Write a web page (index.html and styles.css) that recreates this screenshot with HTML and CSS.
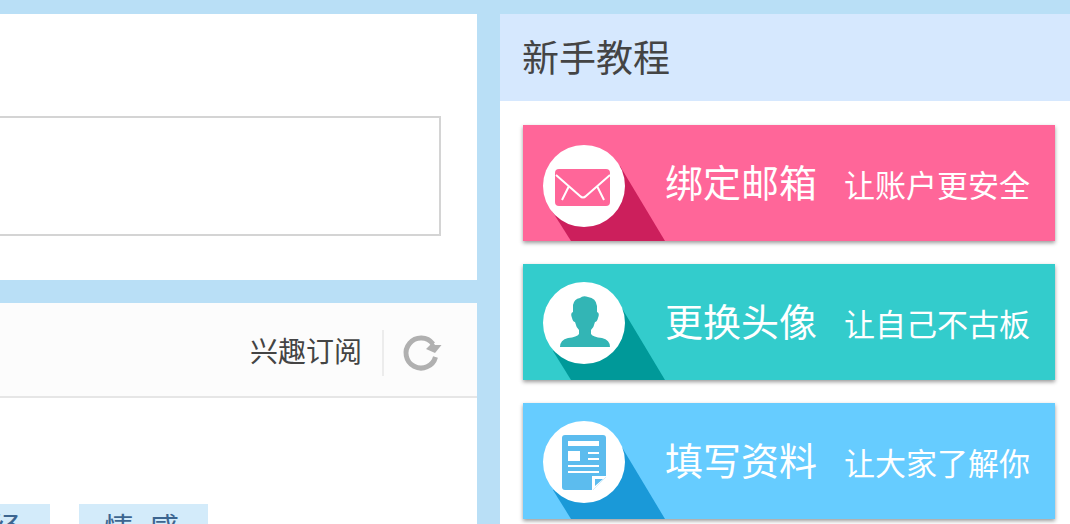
FILE: index.html
```html
<!DOCTYPE html>
<html lang="zh-CN">
<head>
    <meta charset="UTF-8">
    <meta name="viewport" content="width=device-width, initial-scale=1.0">
    <title>新手教程</title>
    <link rel="stylesheet" href="styles.css">
</head>
<body>
    <div class="page">
        <main class="main">
            <form class="card publish">
                <textarea class="publish-text" aria-label="发布内容"></textarea>
            </form>
            <section class="card feed">
                <div class="feed-header">
                    <a class="subscribe" href="#">兴趣订阅</a>
                    <button class="refresh" type="button" aria-label="刷新">
                        <svg width="40" height="40" viewBox="0 0 40 40">
                            <path d="M33.5 24A15 15 0 1 1 31 11" fill="none" stroke="#b0b0b0" stroke-width="5"/>
                            <path d="M39.5 12L33 20L24 16L31 9L33 12Z" fill="#b0b0b0"/>
                        </svg>
                    </button>
                </div>
                <div class="tags">
                    <a class="tag" href="#">财&ensp;经</a>
                    <a class="tag" href="#">情&ensp;感</a>
                </div>
            </section>
        </main>
        <aside class="guide">
            <h2 class="guide-title">新手教程</h2>
            <div class="guide-list">
                <a class="banner banner-mail" href="#">
                    <svg class="banner-icon" width="142" height="116" viewBox="0 0 142 116">
                        <path class="long-shadow" d="M97 41L142 116H48L29 86Z"/>
                        <circle cx="61" cy="61" r="41" fill="#fff"/>
                        <rect class="glyph" x="32" y="44" width="55" height="37" rx="4"/>
                        <path d="M33 50L57 71Q60 74 63 71L87 50M46 61L39 75M74 61L81 75" fill="none" stroke="#fff" stroke-width="2"/>
                    </svg>
                    <span class="banner-name">绑定邮箱</span>
                    <span class="banner-desc">让账户更安全</span>
                </a>
                <a class="banner banner-avatar" href="#">
                    <svg class="banner-icon" width="142" height="116" viewBox="0 0 142 116">
                        <path class="long-shadow" d="M97 41L142 116H48L30 87Z"/>
                        <circle cx="61" cy="59" r="41" fill="#fff"/>
                        <path class="glyph" d="M50 41Q51 35 57 34Q60 31 65 33Q73 34 74 42V48Q77 49 75 54Q74 58 72 58Q71 63 68 66V70Q70 73 79 74Q87 76 87 83H37Q37 76 45 74Q54 73 56 70V66Q53 63 52 58Q50 58 49 54Q47 49 50 48Z"/>
                    </svg>
                    <span class="banner-name">更换头像</span>
                    <span class="banner-desc">让自己不古板</span>
                </a>
                <a class="banner banner-profile" href="#">
                    <svg class="banner-icon" width="142" height="116" viewBox="0 0 142 116">
                        <path class="long-shadow" d="M97 41L142 116H48L30 87Z"/>
                        <circle cx="61" cy="59" r="41" fill="#fff"/>
                        <path class="glyph" d="M42 32H80Q83 32 83 35V74L70 87H42Q39 87 39 84V35Q39 32 42 32Z"/>
                        <path d="M65 50H76M65 56H76M45 63H76M45 69H76" stroke="#fff" stroke-width="2"/>
                        <path d="M45 38H76V43H45ZM45 48H57V58H45ZM69 88V73H84Z" fill="#fff"/>
                        <path class="glyph" d="M72 83V76H80Z"/>
                    </svg>
                    <span class="banner-name">填写资料</span>
                    <span class="banner-desc">让大家了解你</span>
                </a>
            </div>
        </aside>
    </div>
</body>
</html>
```

FILE: styles.css
```css
* {
    box-sizing: border-box;
}
body {
    margin: 0;
    height: 100vh;
    overflow: hidden;
    background-color: #b9dff6;
    font-family: "Liberation Sans", "Noto Sans CJK SC", sans-serif;
    color: #444;
}
a {
    color: inherit;
    text-decoration: none;
}
.page {
    display: grid;
    grid-template-columns: minmax(0, 1fr) 570px;
    gap: 23px;
    min-height: 100vh;
    padding-top: 14px;
}
.main {
    display: flex;
    flex-direction: column;
    gap: 23px;
}
.card {
    background-color: #fff;
}
.publish {
    padding: 102px 36px 44px 0;
}
.publish-text {
    display: block;
    width: 100%;
    height: 120px;
    padding: 16px;
    border: 2px solid #d4d4d4;
    border-left: 0;
    border-radius: 0;
    font: inherit;
    font-size: 28px;
    resize: none;
    outline: none;
}
.feed {
    flex: 1;
}
.feed-header {
    display: flex;
    justify-content: flex-end;
    align-items: center;
    height: 95px;
    padding: 6px 35px 0 0;
    background-color: #fcfcfc;
    border-bottom: 2px solid #e6e6e6;
}
.subscribe {
    padding-right: 20px;
    border-right: 2px solid #ececec;
    font-size: 28px;
    line-height: 46px;
}
.refresh {
    padding: 0;
    margin-left: 18px;
    border: 0;
    background: none;
    cursor: pointer;
}
.refresh svg {
    display: block;
}
.tags {
    display: flex;
    gap: 29px;
    margin-left: -79px;
    padding-top: 106px;
}
.tag {
    flex: none;
    width: 129px;
    padding-right: 4px;
    background-color: #d3ebfa;
    color: #3c6590;
    font-size: 30px;
    line-height: 50px;
    text-align: center;
}
.guide {
    background-color: #fff;
}
.guide-title {
    margin: 0;
    padding: 4px 0 0 22px;
    background-color: #d6e8fe;
    font-size: 37px;
    font-weight: normal;
    line-height: 83px;
}
.guide-list {
    display: flex;
    flex-direction: column;
    gap: 23px;
    padding: 24px 15px 24px 23px;
}
.banner {
    display: flex;
    align-items: center;
    height: 116px;
    box-shadow: 0 2px 4px rgba(0, 0, 0, 0.4);
    color: #fff;
    white-space: nowrap;
}
.banner-mail {
    background-color: #ff6699;
}
.banner-mail .glyph {
    fill: #ff6699;
}
.banner-mail .long-shadow {
    fill: #cc1f5c;
}
.banner-avatar {
    background-color: #33cccc;
}
.banner-avatar .glyph {
    fill: #33b5b5;
}
.banner-avatar .long-shadow {
    fill: #009999;
}
.banner-profile {
    background-color: #66ccff;
}
.banner-profile .glyph {
    fill: #5cbcee;
}
.banner-profile .long-shadow {
    fill: #1a99d8;
}
.banner-name {
    padding-bottom: 6px;
    font-size: 38px;
}
.banner-desc {
    margin-left: 27px;
    font-size: 31px;
}
```
